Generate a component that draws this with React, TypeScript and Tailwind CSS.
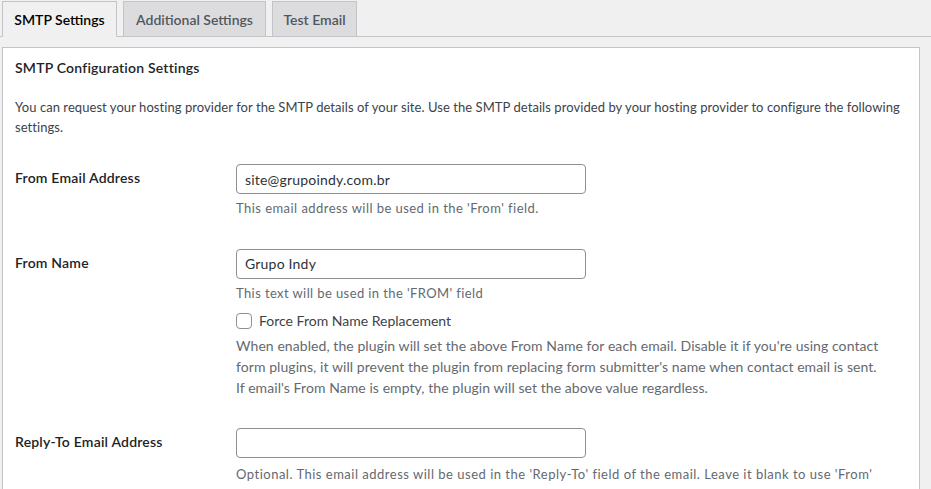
import React from 'react';

const TABS = [
  { label: 'SMTP Settings', width: 'w-[115px]', active: true },
  { label: 'Additional Settings', width: 'w-[143px]', active: false },
  { label: 'Test Email', width: 'w-[85px]', active: false },
];

const Tab: React.FC<{ label: string; width: string; active: boolean }> = ({ label, width, active }) => (
  <div
    className={
      active
        ? `${width} h-[36px] -mb-px flex items-center justify-center border border-[#c3c4c7] border-b-[#f0f0f1] bg-[#f0f0f1] text-[14px] font-semibold text-black`
        : `${width} h-[36px] -mb-px flex items-center justify-center border border-[#c3c4c7] bg-[#dcdcde] text-[14px] font-semibold text-[#50575e]`
    }
  >
    {label}
  </div>
);

const TextInput: React.FC<{ value?: string }> = ({ value }) => (
  <div className="w-[350px] h-[30px] flex items-center rounded-[4px] border border-[#8c8f94] bg-white px-[8px] text-[14px] tracking-[0.2px] text-[#2c3338]">
    {value}
  </div>
);

const Label: React.FC<{ children: React.ReactNode }> = ({ children }) => (
  <div className="w-[221px] shrink-0 pt-[4px] text-[14px] leading-[20px] font-semibold tracking-[0.2px] text-[#1d2327]">
    {children}
  </div>
);

export default function App() {
  return (
    <div className="min-h-screen bg-[#f0f0f1] font-['Lato','Liberation_Sans',sans-serif] text-[#3c434a]">
      {/* Tabs */}
      <div className="flex gap-[6px] border-b border-[#c3c4c7] pl-[2px] pt-[1px]">
        {TABS.map((t) => (
          <Tab key={t.label} {...t} />
        ))}
      </div>

      {/* Settings panel */}
      <div className="ml-[2px] mt-[10px] w-[918px] border border-[#c3c4c7] bg-white px-[12px] pt-[10px] pb-[20px]">
        <h2 className="text-[14px] leading-[20px] font-semibold tracking-[0.2px] text-[#1d2327]">SMTP Configuration Settings</h2>
        <p className="mt-[20px] whitespace-nowrap text-[13px] leading-[19.5px] tracking-[0.06px] text-[#3c434a]">
          You can request your hosting provider for the SMTP details of your site. Use the SMTP details provided by your hosting provider to configure the following
          <br />
          settings.
        </p>

        {/* From Email Address */}
        <div className="mt-[27px] flex">
          <Label>From Email Address</Label>
          <div>
            <TextInput value="site@grupoindy.com.br" />
            <p className="mt-[5px] text-[13px] leading-[19.5px] tracking-[0.45px] text-[#646970]">
              This email address will be used in the 'From' field.
            </p>
          </div>
        </div>

        {/* From Name */}
        <div className="mt-[30px] flex">
          <Label>From Name</Label>
          <div>
            <TextInput value="Grupo Indy" />
            <p className="mt-[5px] text-[13px] leading-[19.5px] tracking-[0.4px] text-[#646970]">This text will be used in the 'FROM' field</p>
            <label className="mt-[8px] flex items-center gap-[7px] text-[14px] leading-[20px] text-[#3c434a]">
              <span className="h-[16px] w-[16px] rounded-[4px] border border-[#8c8f94] bg-white" />
              Force From Name Replacement
            </label>
            <p className="mt-[4px] whitespace-nowrap text-[14px] leading-[21px] tracking-[0.07px] text-[#646970]">
              When enabled, the plugin will set the above From Name for each email. Disable it if you're using contact
              <br />
              form plugins, it will prevent the plugin from replacing form submitter's name when contact email is sent.
              <br />
              If email's From Name is empty, the plugin will set the above value regardless.
            </p>
          </div>
        </div>

        {/* Reply-To */}
        <div className="mt-[30px] flex">
          <Label>Reply-To Email Address</Label>
          <div>
            <TextInput />
            <p className="mt-[7px] whitespace-nowrap text-[13px] leading-[19.5px] tracking-[0.5px] text-[#646970]">
              Optional. This email address will be used in the 'Reply-To' field of the email. Leave it blank to use 'From'
            </p>
          </div>
        </div>
      </div>
    </div>
  );
}
